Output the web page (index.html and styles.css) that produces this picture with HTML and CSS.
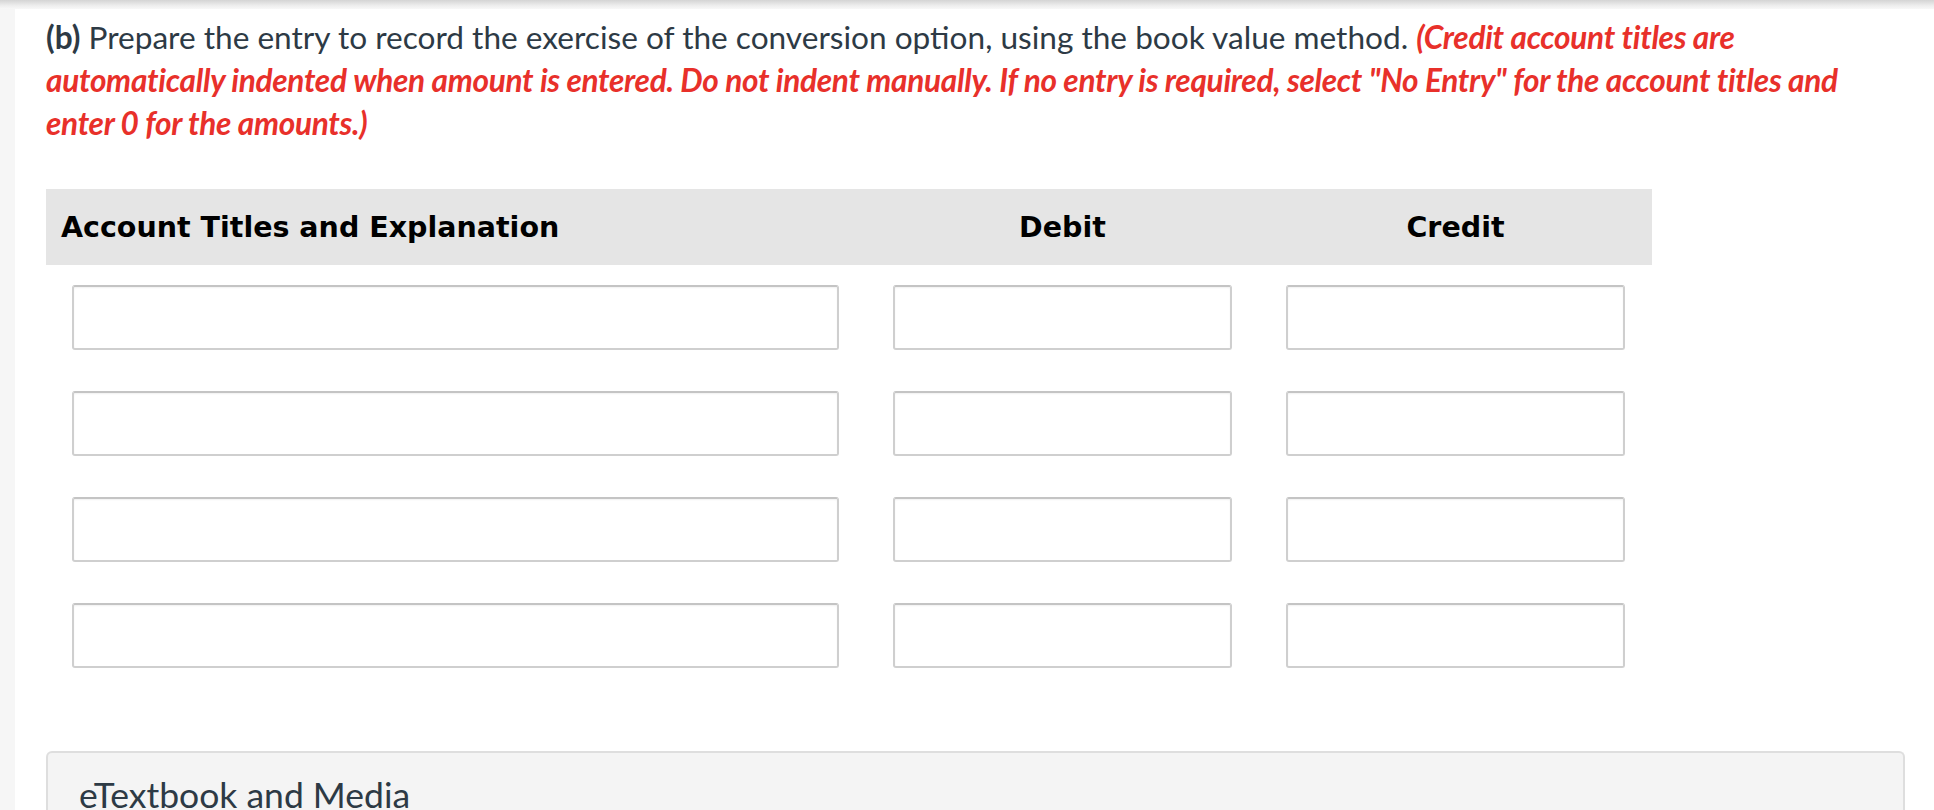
FILE: index.html
```html
<!DOCTYPE html>
<html>
<head>
<meta charset="utf-8">
<link rel="stylesheet" href="styles.css">
</head>
<body>
<div class="shadow"></div>
<div class="page">
  <div class="strip"></div>
  <div class="content">
    <p class="question"><b>(b)</b> Prepare the entry to record the exercise of the conversion option, using the book value method. <em class="note">(Credit account titles are automatically indented when amount is entered. Do not indent manually. If no entry is required, select "No Entry" for the account titles and enter 0 for the amounts.)</em></p>
    <div class="journal">
      <div class="head">
        <div class="h-acct">Account Titles and Explanation</div>
        <div class="h-num">Debit</div>
        <div class="h-num">Credit</div>
      </div>
      <div class="rows">
        <div class="row"><div class="cell c1"><input class="field" type="text"></div><div class="cell"><input class="field" type="text"></div><div class="cell"><input class="field" type="text"></div></div>
        <div class="row"><div class="cell c1"><input class="field" type="text"></div><div class="cell"><input class="field" type="text"></div><div class="cell"><input class="field" type="text"></div></div>
        <div class="row"><div class="cell c1"><input class="field" type="text"></div><div class="cell"><input class="field" type="text"></div><div class="cell"><input class="field" type="text"></div></div>
        <div class="row"><div class="cell c1"><input class="field" type="text"></div><div class="cell"><input class="field" type="text"></div><div class="cell"><input class="field" type="text"></div></div>
      </div>
    </div>
    <div class="media">eTextbook and Media</div>
  </div>
</div>
</body>
</html>
```
FILE: styles.css
```css
html, body {
  margin: 0;
  padding: 0;
  background: #fff;
  overflow: hidden;
}
body {
  width: 1934px;
  height: 810px;
  font-family: Lato, "Open Sans", sans-serif;
}
.shadow {
  height: 9px;
  background: linear-gradient(#d4d4d4, #ededed 60%, #f8f8f8);
}
.page {
  display: flex;
  height: 801px;
}
.strip {
  width: 15px;
  flex: none;
  background: #f6f6f6;
}
.content {
  width: 1859px;
  padding-left: 31px;
}
.question {
  margin: 7px 0 0 0;
  font-size: 31.6px;
  line-height: 43px;
  color: #2d3a45;
  width: 1810px;
}
.question b {
  font-weight: 700;
}
.note {
  color: #e8302a;
  font-weight: 700;
  font-style: italic;
  letter-spacing: -0.3px;
}
.journal {
  margin-top: 44px;
  width: 1606px;
}
.head {
  display: grid;
  grid-template-columns: 820px 393px 393px;
  height: 76px;
  align-items: center;
  background: #e5e5e5;
  font-family: "DejaVu Sans", Verdana, sans-serif;
  font-weight: 700;
  font-size: 28.5px;
  color: #000;
}
.h-acct {
  padding-left: 15px;
}
.h-num {
  text-align: center;
}
.rows {
  padding-top: 20px;
  display: flex;
  flex-direction: column;
  gap: 41px;
}
.row {
  display: grid;
  grid-template-columns: 820px 393px 393px;
}
.cell {
  padding: 0 27px;
}
.cell.c1 {
  padding-left: 26px;
}
.field {
  display: block;
  box-sizing: border-box;
  width: 100%;
  height: 65px;
  margin: 0;
  border: 2px solid #cfcfcf;
  border-top-color: #c4c4c4;
  border-radius: 3px;
  background: #fff;
  box-shadow: inset 0 1px 2px rgba(0,0,0,0.06);
}
.media {
  margin-top: 83px;
  box-sizing: border-box;
  width: 1859px;
  height: 80px;
  padding: 22px 0 0 31px;
  background: #f4f4f4;
  border: 2px solid #dedede;
  border-bottom: none;
  border-radius: 6px 6px 0 0;
  font-size: 35.5px;
  line-height: 40px;
  color: #2d3a45;
}
```
